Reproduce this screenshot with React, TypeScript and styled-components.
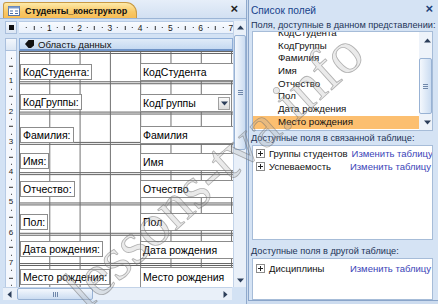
import styled, { createGlobalStyle } from 'styled-components';

const GlobalStyle = createGlobalStyle`
  html, body { margin: 0; padding: 0; }
  body {
    font-family: "Liberation Sans", Arial, sans-serif;
    font-size: 10px;
    background: #cddcef;
  }
`;

const CM = 30.3;

const Screen = styled.div`
  position: relative;
  width: 438px;
  height: 304px;
  display: flex;
  overflow: hidden;
  background: #cddcef;
`;

/* ---------- left: form designer ---------- */

const DesignPane = styled.div`
  flex: none;
  width: 247px;
  height: 304px;
  display: flex;
  flex-direction: column;
  background: #d3e2f4;
  border-right: 1px solid #8fa9cc;
  box-sizing: border-box;
`;

const TabStrip = styled.div`
  height: 19px;
  display: flex;
  align-items: flex-end;
  padding-left: 3px;
  padding-right: 8px;
  background: linear-gradient(#e6eef9, #d2e0f2);
  border-bottom: 1px solid #9cb5d6;
  box-sizing: border-box;
`;

const Tab = styled.div`
  height: 16px;
  display: flex;
  align-items: center;
  gap: 5px;
  padding: 0 9px 0 4px;
  background: linear-gradient(#fdeaa9, #f9c866 60%, #f7bd55);
  border: 1px solid #c89a45;
  border-bottom: none;
  border-radius: 3px 11px 0 0;
  font-weight: bold;
  font-size: 9px;
  letter-spacing: -0.1px;
  color: #111;
  box-sizing: border-box;
`;

const CloseGlyph = styled.span<{ $color?: string }>`
  margin-left: auto;
  margin-bottom: 3px;
  font-size: 13px;
  font-weight: bold;
  line-height: 12px;
  color: ${(p) => p.$color || '#222'};
`;

const DesignBody = styled.div`
  flex: 1;
  display: flex;
  padding-top: 2px;
  min-height: 0;
`;

const DesignMain = styled.div`
  width: 233px;
  display: flex;
  flex-direction: column;
`;

const RulerRow = styled.div<{ $after?: number }>`
  height: 13px;
  flex: none;
  display: flex;
  gap: 2px;
  padding-left: 5px;
  margin-bottom: ${(p) => p.$after || 0}px;
`;

const CornerBox = styled.div`
  width: 12px;
  flex: none;
  display: flex;
  align-items: center;
  justify-content: center;
  background: linear-gradient(#f3f7fc, #dbe6f4);
  border: 1px solid #a9bfdc;
  box-sizing: border-box;
`;

const BlackDot = styled.div`
  width: 5px;
  height: 5px;
  background: #111;
`;

const HRuler = styled.div`
  flex: 1;
  display: flex;
  background: linear-gradient(#f8fbff, #e9f0fa);
  border-top: 1px solid #b7cbe5;
  border-bottom: 1px solid #b7cbe5;
  overflow: hidden;
`;

const HTick = styled.div`
  width: ${CM / 4}px;
  flex: none;
  display: flex;
  align-items: center;
  justify-content: center;
  font-size: 8.5px;
  color: #222;
  transform: translateX(50%);
`;

const TickMark = styled.span<{ $long?: boolean; $vertical?: boolean }>`
  display: block;
  background: #333;
  width: ${(p) => (p.$vertical ? (p.$long ? 4 : 1) : 1)}px;
  height: ${(p) => (p.$vertical ? 1 : p.$long ? 4 : 1)}px;
`;

const SectionBar = styled.div`
  flex: 1;
  display: flex;
  align-items: center;
  gap: 4px;
  padding-left: 5px;
  font-size: 9.6px;
  color: #111;
  background: linear-gradient(#e0ebf8, #c5d9f1);
  border: 1px solid #8eaed8;
  border-bottom: 2px solid #6f93c6;
  box-sizing: border-box;
`;

const CanvasRow = styled.div`
  flex: 1;
  display: flex;
  gap: 2px;
  padding-left: 5px;
  min-height: 0;
`;

const VRuler = styled.div`
  width: 12px;
  flex: none;
  display: flex;
  flex-direction: column;
  align-items: center;
  background: #f5f8fd;
  border-left: 1px solid #b7cbe5;
  border-right: 1px solid #b7cbe5;
  box-sizing: border-box;
  overflow: hidden;
`;

const VTick = styled.div`
  height: ${CM / 4}px;
  flex: none;
  display: flex;
  align-items: center;
  justify-content: center;
  font-size: 8px;
  line-height: 8px;
  color: #222;
  transform: translateY(50%);
`;

const Canvas = styled.div`
  flex: 1;
  display: flex;
  flex-direction: column;
  overflow: hidden;
  background-color: #fff;
  border-top: 1px solid #666;
  box-sizing: border-box;
  font-size: 10.5px;
  background-image:
    linear-gradient(to right, #6e6e6e 1px, transparent 1px),
    linear-gradient(to bottom, #5e5e5e 1px, transparent 1px, transparent 2px, #5e5e5e 2px, #5e5e5e 3px, transparent 3px);
  background-size: ${CM}px 100%, 100% ${CM}px;
  background-position: 0 0, 0 ${CM - 1}px;
`;

const FieldRow = styled.div<{ $gap: number }>`
  display: grid;
  grid-template-columns: 121px 1fr;
  align-items: start;
  margin-top: ${(p) => p.$gap}px;
`;

const FieldLabel = styled.div<{ $drop?: number }>`
  justify-self: start;
  margin-left: 1px;
  margin-top: ${(p) => p.$drop || 0}px;
  height: 16px;
  line-height: 14px;
  padding: 0 2px;
  background: #fff;
  border: 1px solid #8c8c8c;
  box-sizing: border-box;
  color: #000;
  white-space: nowrap;
`;

const TextBox = styled.div<{ $tall?: boolean }>`
  width: 120px;
  height: ${(p) => (p.$tall ? 24 : 18)}px;
  display: flex;
  align-items: ${(p) => (p.$tall ? 'flex-start' : 'center')};
  padding: ${(p) => (p.$tall ? '3px 2px 0' : '0 2px')};
  background: #fff;
  border: 1px solid #8c8c8c;
  box-sizing: border-box;
  color: #000;
  white-space: nowrap;
`;

const ComboBox = styled(TextBox)`
  width: 92px;
  padding-right: 1px;
`;

const DropButton = styled.div`
  margin-left: auto;
  width: 12px;
  height: 13px;
  display: flex;
  align-items: center;
  justify-content: center;
  background: linear-gradient(#fafafa, #dcdcdc);
  border: 1px solid #a0a0a0;
  box-sizing: border-box;
`;

const VScroll = styled.div`
  width: 13px;
  display: flex;
  flex-direction: column;
  background: #e9f0f9;
  border-left: 1px solid #c3d3e8;
  box-sizing: border-box;
`;

const ArrowCell = styled.div<{ $size?: number }>`
  height: ${(p) => p.$size || 13}px;
  width: ${(p) => p.$size || 13}px;
  flex: none;
  display: flex;
  align-items: center;
  justify-content: center;
`;

const Track = styled.div<{ $row?: boolean }>`
  flex: 1;
  display: flex;
  flex-direction: ${(p) => (p.$row ? 'row' : 'column')};
  min-height: 0;
`;

const Thumb = styled.div<{ $row?: boolean; $start: number; $len: number }>`
  ${(p) => (p.$row ? `margin-left: ${p.$start}px; width: ${p.$len}px;` : `margin-top: ${p.$start}px; height: ${p.$len}px;`)}
  display: flex;
  align-items: center;
  justify-content: center;
  background: ${(p) => (p.$row ? 'linear-gradient(#f4f8fd, #cbdcf1)' : 'linear-gradient(to right, #f4f8fd, #cbdcf1)')};
  border: 1px solid #98b2d4;
  border-radius: 2px;
  box-sizing: border-box;
`;

const HScroll = styled.div`
  height: 13px;
  flex: none;
  margin: 0 14px 4px 3px;
  display: flex;
  background: #e9f0f9;
  border-top: 1px solid #c3d3e8;
  box-sizing: border-box;
`;

/* ---------- right: field list ---------- */

const FieldListPane = styled.div`
  flex: 1;
  min-width: 0;
  margin-left: 1px;
  height: 301px;
  display: flex;
  flex-direction: column;
  padding: 0 5px 0 2px;
  background: #d5e3f4;
  border-left: 1px solid #8aa5ca;
  border-bottom: 1px solid #8aa5ca;
  box-sizing: border-box;
  overflow: hidden;
`;

const PaneHeader = styled.div`
  height: 20px;
  flex: none;
  display: flex;
  align-items: center;
  font-size: 10.2px;
  color: #15428b;
`;

const GroupCaption = styled.div<{ $h: number; $pad?: number }>`
  height: ${(p) => p.$h}px;
  flex: none;
  padding-top: ${(p) => p.$pad || 0}px;
  line-height: ${(p) => p.$h - (p.$pad || 0)}px;
  font-size: 9.2px;
  color: #1d3458;
  white-space: nowrap;
  box-sizing: border-box;
`;

const ListBox = styled.div<{ $h?: number }>`
  ${(p) => (p.$h ? `height: ${p.$h}px; flex: none;` : 'flex: 1;')}
  margin-left: 1px;
  display: flex;
  background: #fff;
  border: 1px solid #a6bcd8;
  box-sizing: border-box;
  overflow: hidden;
`;

const ListItems = styled.div<{ $offset?: number }>`
  flex: 1;
  min-width: 0;
  display: flex;
  flex-direction: column;
  margin-top: ${(p) => p.$offset || 0}px;
  padding-top: 1px;
`;

const FieldItem = styled.div<{ $selected?: boolean }>`
  height: 12.7px;
  flex: none;
  line-height: 12.7px;
  padding-left: 25px;
  font-size: 9.7px;
  color: #111;
  background: ${(p) => (p.$selected ? '#fcbf70' : 'transparent')};
`;

const TableItem = styled.div`
  height: 13px;
  display: flex;
  align-items: center;
  gap: 4px;
  padding: 0 1px 0 3px;
  font-size: 9.5px;
  color: #111;
  white-space: nowrap;
`;

const PlusBox = styled.span`
  width: 9px;
  height: 9px;
  flex: none;
  position: relative;
  border: 1px solid #8d8d8d;
  box-sizing: border-box;
  background: #fff;
  &::before, &::after {
    content: '';
    position: absolute;
    background: #222;
  }
  &::before { left: 1px; right: 1px; top: 3px; height: 1px; }
  &::after { top: 1px; bottom: 1px; left: 3px; width: 1px; }
`;

const EditLink = styled.span`
  margin-left: auto;
  color: #3a44b8;
`;

const ListScroll = styled.div`
  width: 13px;
  flex: none;
  display: flex;
  flex-direction: column;
  background: #eef3fa;
`;

const Watermark = styled.div`
  position: absolute;
  left: 213px;
  top: 170px;
  transform: translate(-50%, -50%) rotate(-42deg);
  font-family: "Liberation Serif", "Times New Roman", serif;
  font-size: 60px;
  line-height: 1;
  white-space: nowrap;
  color: rgba(170, 170, 170, 0.25);
  -webkit-text-stroke: 0.8px rgba(110, 110, 110, 0.5);
  pointer-events: none;
`;

/* ---------- icons ---------- */

const FormIcon = () => (
  <svg width="12" height="10" viewBox="0 0 12 10">
    <rect x="0.5" y="0.5" width="11" height="9" fill="#fff" stroke="#5a78a8" />
    <rect x="0.5" y="0.5" width="11" height="2" fill="#7d9bcb" />
    <path d="M2 5h3M2 7.5h3M7 5h3M7 7.5h3" stroke="#4a6fa8" strokeWidth="1" />
  </svg>
);

const SectionIcon = () => (
  <svg width="9" height="8" viewBox="0 0 9 8">
    <path d="M0 4L3.5 0H9V5.5L6 8H3.5z" fill="#111" />
  </svg>
);

const Arrow = ({ dir }: { dir: 'up' | 'down' | 'left' | 'right' }) => {
  const paths = {
    up: 'M0 5.5L3.5 1.5L7 5.5z',
    down: 'M0 1.5L7 1.5L3.5 5.5z',
    left: 'M5.5 0L5.5 7L1.5 3.5z',
    right: 'M1.5 0L5.5 3.5L1.5 7z',
  };
  return (
    <svg width="7" height="7" viewBox="0 0 7 7">
      <path d={paths[dir]} fill="#2c3e5a" />
    </svg>
  );
};

const Grip = ({ row }: { row?: boolean }) => (
  <svg width="7" height="7" viewBox="0 0 7 7">
    {row ? (
      <path d="M1.5 1v5M3.5 1v5M5.5 1v5" stroke="#6f87aa" strokeWidth="1" />
    ) : (
      <path d="M1 1.5h5M1 3.5h5M1 5.5h5" stroke="#6f87aa" strokeWidth="1" />
    )}
  </svg>
);

/* ---------- data ---------- */

const formFields: { label: string; gap: number; drop?: number; kind?: 'combo' | 'tall' }[] = [
  { label: 'КодСтудента', gap: 11, drop: 1 },
  { label: 'КодГруппы', gap: 13, kind: 'combo' },
  { label: 'Фамилия', gap: 14, drop: 1 },
  { label: 'Имя', gap: 9 },
  { label: 'Отчество', gap: 9, drop: 1 },
  { label: 'Пол', gap: 15, drop: 1 },
  { label: 'Дата рождения', gap: 10 },
  { label: 'Место рождения', gap: 8, drop: 2, kind: 'tall' },
];

const listFields = ['КодСтудента', 'КодГруппы', 'Фамилия', 'Имя', 'Отчество', 'Пол', 'Дата рождения', 'Место рождения'];

function rulerMarks(count: number, vertical: boolean) {
  const Cell = vertical ? VTick : HTick;
  return Array.from({ length: count }, (_, i) => {
    const step = (i + 1) % 4;
    let content: React.ReactNode;
    if (step === 0) content = (i + 1) / 4;
    else if (step === 2) content = <TickMark $long $vertical={vertical} />;
    else content = <TickMark $vertical={vertical} />;
    return <Cell key={i}>{content}</Cell>;
  });
}

export default function App() {
  return (
    <Screen>
      <GlobalStyle />
      <DesignPane>
        <TabStrip>
          <Tab>
            <FormIcon />
            Студенты_конструктор
          </Tab>
          <CloseGlyph>×</CloseGlyph>
        </TabStrip>
        <DesignBody>
          <DesignMain>
            <RulerRow $after={4}>
              <CornerBox>
                <BlackDot />
              </CornerBox>
              <HRuler>{rulerMarks(28, false)}</HRuler>
            </RulerRow>
            <RulerRow>
              <CornerBox />
              <SectionBar>
                <SectionIcon />
                Область данных
              </SectionBar>
            </RulerRow>
            <CanvasRow>
              <VRuler>{rulerMarks(31, true)}</VRuler>
              <Canvas>
                {formFields.map((f) => (
                  <FieldRow key={f.label} $gap={f.gap}>
                    <FieldLabel $drop={f.drop}>{f.label}:</FieldLabel>
                    {f.kind === 'combo' ? (
                      <ComboBox>
                        {f.label}
                        <DropButton>
                          <Arrow dir="down" />
                        </DropButton>
                      </ComboBox>
                    ) : (
                      <TextBox $tall={f.kind === 'tall'}>{f.label}</TextBox>
                    )}
                  </FieldRow>
                ))}
              </Canvas>
            </CanvasRow>
          </DesignMain>
          <VScroll>
            <ArrowCell>
              <Arrow dir="up" />
            </ArrowCell>
            <Track>
              <Thumb $start={1} $len={115}>
                <Grip />
              </Thumb>
            </Track>
            <ArrowCell>
              <Arrow dir="down" />
            </ArrowCell>
          </VScroll>
        </DesignBody>
        <HScroll>
          <ArrowCell>
            <Arrow dir="left" />
          </ArrowCell>
          <Track $row>
            <Thumb $row $start={1} $len={76}>
              <Grip row />
            </Thumb>
          </Track>
          <ArrowCell>
            <Arrow dir="right" />
          </ArrowCell>
        </HScroll>
      </DesignPane>

      <FieldListPane>
        <PaneHeader>
          Список полей
          <CloseGlyph $color="#1d3f78">×</CloseGlyph>
        </PaneHeader>
        <GroupCaption $h={11}>Поля, доступные в данном представлении:</GroupCaption>
        <ListBox $h={100}>
          <ListItems $offset={-6}>
            {listFields.map((name) => (
              <FieldItem key={name} $selected={name === 'Место рождения'}>
                {name}
              </FieldItem>
            ))}
          </ListItems>
          <ListScroll>
            <ArrowCell $size={16}>
              <Arrow dir="up" />
            </ArrowCell>
            <Track>
              <Thumb $start={10} $len={56}>
                <Grip />
              </Thumb>
            </Track>
            <ArrowCell $size={16}>
              <Arrow dir="down" />
            </ArrowCell>
          </ListScroll>
        </ListBox>
        <GroupCaption $h={14}>Доступные поля в связанной таблице:</GroupCaption>
        <ListBox $h={95}>
          <ListItems>
            <TableItem>
              <PlusBox />
              Группы студентов
              <EditLink>Изменить таблицу</EditLink>
            </TableItem>
            <TableItem>
              <PlusBox />
              Успеваемость
              <EditLink>Изменить таблицу</EditLink>
            </TableItem>
          </ListItems>
        </ListBox>
        <GroupCaption $h={18} $pad={5}>Доступные поля в другой таблице:</GroupCaption>
        <ListBox>
          <ListItems $offset={2}>
            <TableItem>
              <PlusBox />
              Дисциплины
              <EditLink>Изменить таблицу</EditLink>
            </TableItem>
          </ListItems>
        </ListBox>
      </FieldListPane>

      <Watermark>lessons-tva.info</Watermark>
    </Screen>
  );
}
